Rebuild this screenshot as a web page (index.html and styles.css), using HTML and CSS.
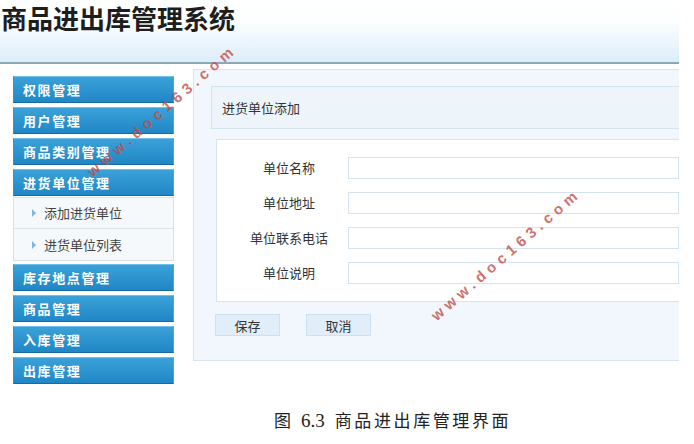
FILE: index.html
```html
<!DOCTYPE html>
<html lang="zh">
<head>
<meta charset="utf-8">
<title>商品进出库管理系统</title>
<link rel="stylesheet" href="styles.css">
</head>
<body>
<div class="page">
  <header class="top"><h1 class="title">商品进出库管理系统</h1></header>
  <div class="wrap">
    <nav class="side">
      <div class="menu">权限管理</div>
      <div class="menu">用户管理</div>
      <div class="menu">商品类别管理</div>
      <div class="menu">进货单位管理</div>
      <ul class="sub">
        <li><span class="arrow"></span>添加进货单位</li>
        <li><span class="arrow"></span>进货单位列表</li>
      </ul>
      <div class="menu">库存地点管理</div>
      <div class="menu">商品管理</div>
      <div class="menu">入库管理</div>
      <div class="menu">出库管理</div>
    </nav>
    <main class="panel">
      <div class="crumb">进货单位添加</div>
      <div class="form">
        <label class="lbl">单位名称</label><input class="inp" type="text">
        <label class="lbl">单位地址</label><input class="inp" type="text">
        <label class="lbl">单位联系电话</label><input class="inp" type="text">
        <label class="lbl">单位说明</label><input class="inp" type="text">
      </div>
      <div class="btns">
        <button class="btn" type="button">保存</button>
        <button class="btn" type="button">取消</button>
      </div>
    </main>
  </div>
  <p class="caption"><span class="cap-a">图</span><span class="cap-num">6.3</span><span class="cap-b">商品进出库管理界面</span></p>
  <div class="wm wm1">www.doc163.com</div>
  <div class="wm wm2">www.doc163.com</div>
</div>
</body>
</html>
```
FILE: styles.css
```css
body {
  margin: 0;
  background: #fff;
  font-family: "Noto Sans CJK SC", sans-serif;
}
.page {
  width: 679px;
  position: relative;
}
.top {
  height: 62px;
  background: linear-gradient(#ffffff 0%, #fcfeff 35%, #dcedf9 100%);
  border-bottom: 2px solid #8da8b3;
}
.title {
  margin: 0;
  padding: 1px 0 0 1px;
  font-size: 26px;
  line-height: 34px;
  font-weight: 700;
  color: #1e1e1e;
}
.wrap {
  display: flex;
  align-items: flex-start;
}
.side {
  width: 161px;
  padding: 12px 0 0 13px;
  display: flex;
  flex-direction: column;
  gap: 4px;
}
.menu {
  height: 25px;
  line-height: 26px;
  border-top: 1px solid #72bfe8;
  border-bottom: 1px solid #176c9f;
  border-left: 1px solid #2f94cf;
  border-right: 1px solid #4aa6da;
  background: linear-gradient(#3ba1d9, #1f87c5);
  color: #fff;
  font-weight: 700;
  font-size: 13px;
  letter-spacing: 1.6px;
  padding-left: 9px;
}
.sub {
  list-style: none;
  margin: -3px 0 -1px;
  padding: 0;
  border: 1px solid #d6e1e9;
  background: #f5f9fc;
}
.sub li {
  height: 30px;
  line-height: 30px;
  padding-left: 18px;
  font-size: 13px;
  color: #444;
  display: flex;
  align-items: center;
}
.sub li + li {
  border-top: 1px solid #dbe5ec;
  height: 31px;
}
.arrow {
  width: 0;
  height: 0;
  border-top: 4px solid transparent;
  border-bottom: 4px solid transparent;
  border-left: 4px solid #7db9de;
  margin-right: 8px;
}
.panel {
  flex: 1;
  margin: 5px 0 0 19px;
  background: #f1f7fc;
  border: 1px solid #d6e6f2;
  border-right: none;
  padding: 16px 0 24px 17px;
}
.crumb {
  height: 41px;
  line-height: 41px;
  border: 1px solid #d3e4f1;
  border-right: none;
  background: #edf5fb;
  font-size: 13px;
  color: #333;
  padding-left: 10px;
}
.form {
  margin: 10px 0 0 5px;
  background: #fff;
  border: 1px solid #d8e5ef;
  border-right: none;
  padding: 17px 0 17px 13px;
  display: grid;
  grid-template-columns: 118px 1fr;
  row-gap: 13px;
}
.lbl {
  text-align: center;
  font-size: 13px;
  line-height: 22px;
  color: #333;
}
.inp {
  box-sizing: border-box;
  height: 22px;
  margin: 0;
  border: 1px solid #d3e3ef;
  background: #fff;
  width: 100%;
}
.btns {
  margin: 12px 0 0 4px;
  display: flex;
  gap: 26px;
}
.btn {
  box-sizing: border-box;
  width: 65px;
  height: 22px;
  padding: 0;
  background: #e1eef9;
  border: 1px solid #cfe0ef;
  font-family: "Noto Sans CJK SC", sans-serif;
  font-size: 13px;
  color: #333;
}
.caption {
  margin: 24px 0 0;
  padding-left: 274px;
  font-size: 17px;
  line-height: 24px;
  color: #222;
  white-space: nowrap;
}
.cap-num {
  font-family: "Liberation Serif", serif;
  font-size: 19px;
  margin: 0 10px 0 10px;
}
.cap-b {
  letter-spacing: 2.6px;
}
.wm {
  position: absolute;
  color: rgba(195, 75, 72, 0.8);
  font: bold 15px/15px "Liberation Sans", sans-serif;
  letter-spacing: 4.8px;
  white-space: nowrap;
  transform-origin: 0 100%;
  transform: rotate(-41deg);
}
.wm1 {
  left: 94px;
  top: 164px;
}
.wm2 {
  left: 438px;
  top: 308px;
}
```
